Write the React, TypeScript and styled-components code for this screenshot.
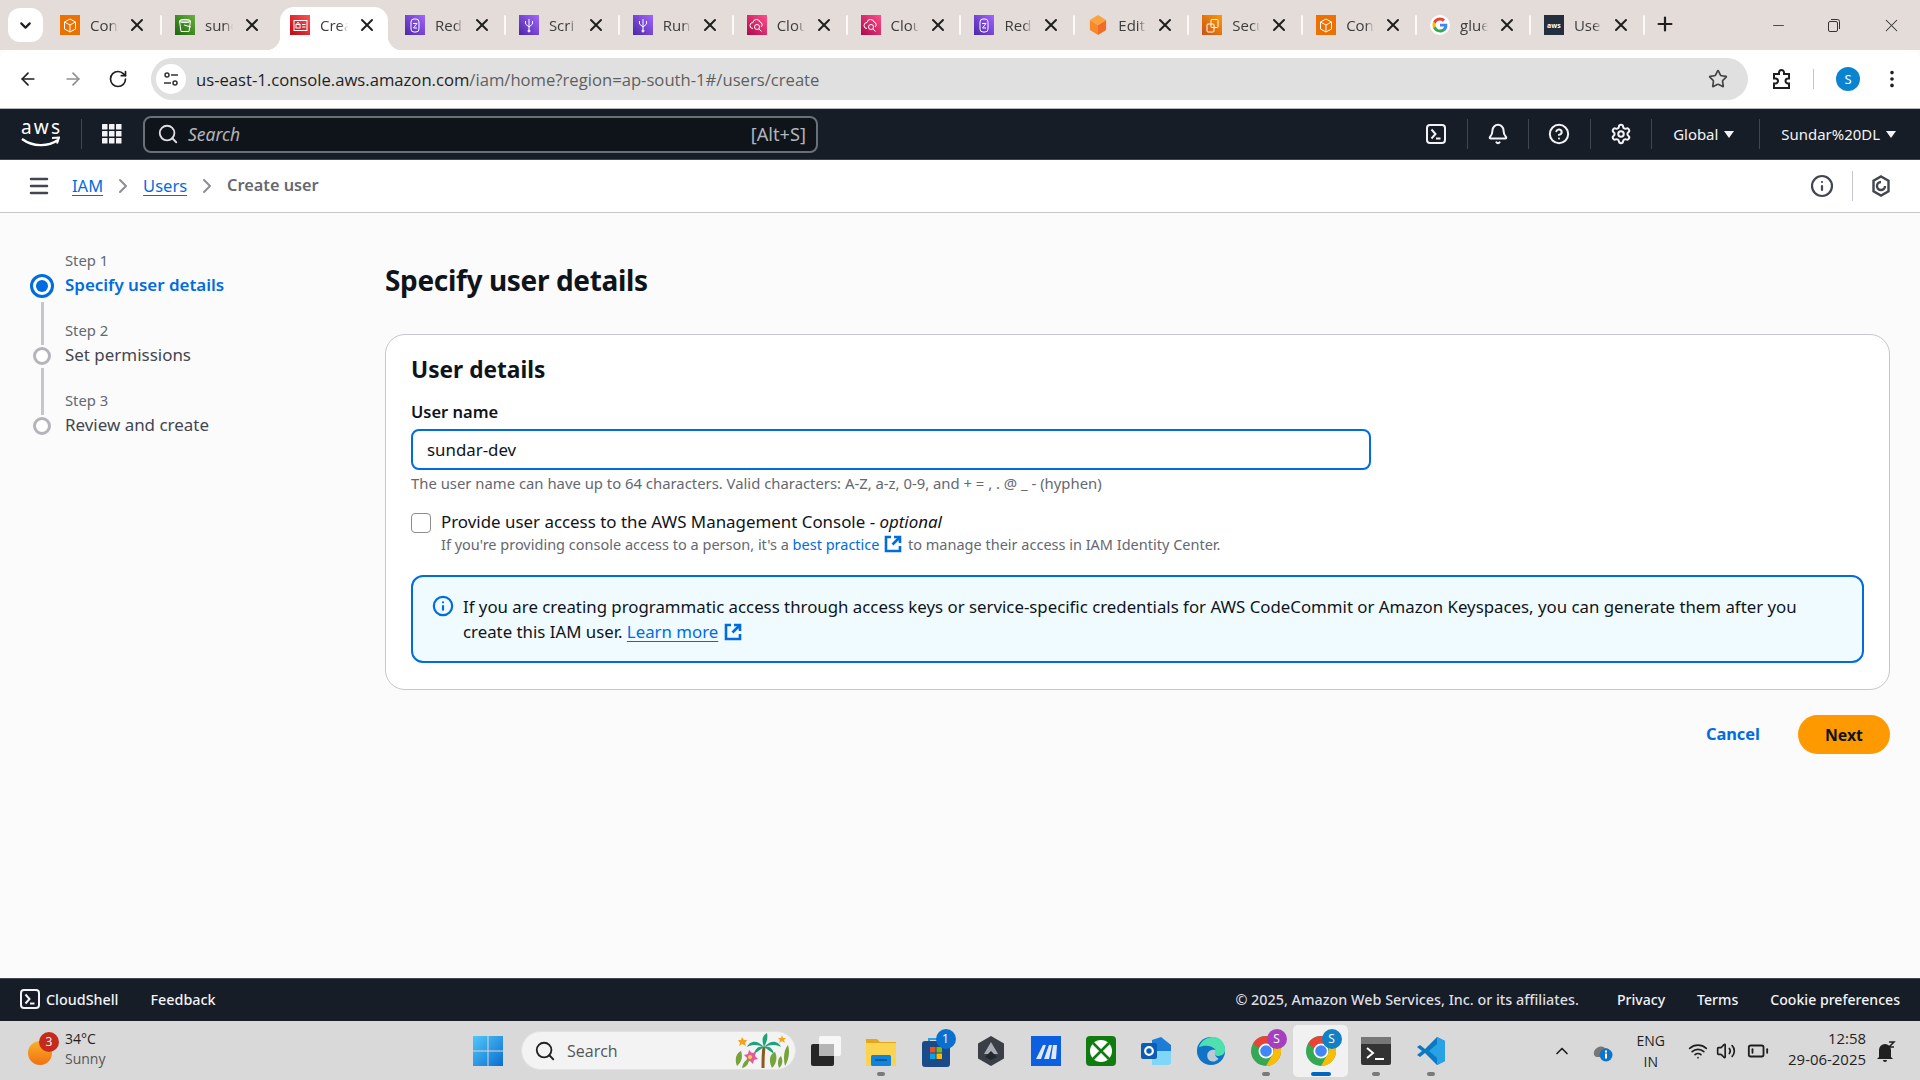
import React from "react";
import styled, { createGlobalStyle } from "styled-components";
import { ArrowLeft, ArrowRight, RotateCw, Star, EllipsisVertical, Plus, Minus, X, ChevronDown, Search as SearchIcon, Bell, CircleHelp, Settings, Info, ChevronRight, Menu, Wifi, Volume2, BatteryLow, ChevronUp } from "lucide-react";

const Global = createGlobalStyle`
  html, body { margin: 0; padding: 0; width: 1920px; height: 1080px; overflow: hidden; background: #fbfbfb; }
  * { box-sizing: border-box; }
  body { font-family: "Noto Sans", "Open Sans", sans-serif; color: #0f141a; }
`;
const Page = styled.div`display: flex; flex-direction: column; width: 1920px; height: 1080px;`;

/* tab strip */
const TabStrip = styled.div`display: flex; align-items: flex-end; height: 50px; background: #e3dcd9; padding-left: 8px; position: relative;`;
const TabMenu = styled.div`width: 35px; height: 34px; margin-bottom: 8px; margin-right: 4px; border-radius: 12px; background: #fff; display: flex; align-items: center; justify-content: center; color: #1f1f1f;`;
const Tab = styled.div<{ $wide?: boolean; $noSep?: boolean }>`
  width: ${p => (p.$wide ? "115px" : "113.9px")}; height: 43px; display: flex; align-items: center; padding: 0 0 7px 13px; flex: none; position: relative;
  &::after { content: ""; display: ${p => (p.$noSep ? "none" : "block")}; position: absolute; right: 0; top: 8px; width: 2px; height: 20px; border-radius: 1px; background: #fbf8f7; }
`;
const ActiveShape = styled.span`
  position: absolute; left: 3px; right: 4px; top: 0; bottom: 0; background: #fff; border-radius: 14px 14px 0 0;
  &::before, &::after { content: ""; position: absolute; bottom: 0; width: 14px; height: 14px; }
  &::before { left: -14px; background: radial-gradient(circle at 0 0, transparent 14px, #fff 14.5px); }
  &::after { right: -14px; background: radial-gradient(circle at 100% 0, transparent 14px, #fff 14.5px); }
`;
const TabTitle = styled.span`
  font-family: "Open Sans", sans-serif; font-size: 15px; color: #3c3c3c; width: 28px; margin-left: 10px; overflow: hidden; white-space: nowrap; flex: none; position: relative;
  mask-image: linear-gradient(to right, #000 70%, transparent 100%);
`;
const TabClose = styled.span`margin-left: 9px; display: flex; color: #1f1f1f; position: relative;`;
const TabIcon = styled.span<{ $bg: string }>`width: 20px; height: 20px; flex: none; display: flex; align-items: center; justify-content: center; position: relative; background: ${p => p.$bg};`;
const AwsFavicon = styled.span`color: #fff; font-size: 7px; font-weight: 700;`;
const NewTab = styled.div`margin: 0 0 15px 9px; display: flex; color: #1f1f1f;`;
const WindowButtons = styled.div`margin-left: auto; display: flex; align-items: center; height: 50px; padding-right: 18px; gap: 39px; color: #333;`;

/* address bar */
const AddressBar = styled.div`display: flex; align-items: center; height: 58px; background: #fff; border-radius: 10px 10px 0 0; padding: 0 15px 0 18px; flex: none;`;
const NavIcons = styled.div`display: flex; gap: 25px; color: #1f1f1f; margin-right: 23px;`;
const UrlPill = styled.div`width: 1597px; height: 42px; border-radius: 21px; background: #e0e0e0; display: flex; align-items: center; padding: 0 20px 0 5px;`;
const SiteInfo = styled.span`width: 30px; height: 30px; border-radius: 50%; background: #fff; display: flex; align-items: center; justify-content: center; margin-right: 10px;`;
const UrlText = styled.span`font-family: "Open Sans", sans-serif; font-size: 16.65px; color: #5f5f5f; flex: 1; b { font-weight: 400; color: #1f1f1f; }`;
const BarRight = styled.div`display: flex; align-items: center; margin-left: 23px; flex: 1; color: #1f1f1f;`;
const BarSep = styled.span`width: 1px; height: 20px; background: #c4c4c4; margin: 0 22px 0 20px;`;
const Avatar = styled.span`width: 24px; height: 24px; border-radius: 50%; background: #0a84d0; color: #fff; font-size: 13px; display: flex; align-items: center; justify-content: center; margin-right: 21px;`;

/* console nav */
const TopNav = styled.div`height: 52px; flex: none; background: #161d26; border-top: 1px solid #b4b4bb; border-bottom: 1px solid #424650; display: flex; align-items: center; color: #f3f3f7; padding-left: 21px;`;
const LogoWrap = styled.div`width: 39px; height: 30px; display: flex; flex: none; margin-right: 21px;`;
const NavSep = styled.span`width: 1px; height: 30px; background: #424650; flex: none;`;
const GridWrap = styled.div`display: flex; margin: 0 21px 0 20px;`;
const SearchBox = styled.div`width: 675px; height: 37px; border: 2px solid #6b6f78; border-radius: 8px; background: #0f141a; display: flex; align-items: center; padding: 0 10px 0 12px; color: #dedee3;`;
const SearchHint = styled.span`font-style: italic; font-size: 17.5px; color: #b4b4bb; margin-left: 9px; flex: 1;`;
const SearchKey = styled.span`font-size: 18.2px; color: #b4b4bb;`;
const NavRight = styled.div`margin-left: auto; display: flex; align-items: center; height: 100%; padding-right: 24px;`;
const NavIconCell = styled.div`width: 60.5px; display: flex; justify-content: center;`;
const NavText = styled.div<{ $pr: number }>`display: flex; align-items: center; gap: 6px; font-size: 14.95px; padding: 0 ${p => p.$pr}px 0 21px; color: #f3f3f7; white-space: nowrap;`;
const Caret = styled.span`width: 0; height: 0; border-left: 5px solid transparent; border-right: 5px solid transparent; border-top: 7px solid currentColor;`;

/* breadcrumbs */
const Crumbs = styled.div`height: 53px; flex: none; background: #fff; border-bottom: 1px solid #c6c6cd; display: flex; align-items: center; padding: 0 29px 0 27px;`;
const CrumbMenu = styled.span`display: flex; color: #424650; margin-right: 21px;`;
const CrumbLink = styled.a`color: #006ce0; font-size: 16.5px; margin-bottom: 2px; text-decoration: underline; text-underline-offset: 3px;`;
const CrumbChevron = styled.span`display: flex; color: #8c8c94; margin: 0 8px;`;
const CrumbCurrent = styled.span`color: #656871; font-size: 16.3px; margin-bottom: 2px; font-weight: 600;`;
const CrumbRight = styled.div`margin-left: auto; display: flex; align-items: center; color: #424650;`;
const CrumbSep = styled.span`width: 1px; height: 30px; background: #c6c6cd; margin: 0 18px;`;

/* main */
const Main = styled.div`flex: 1; display: flex; min-height: 0; padding: 36px 30px 0 29px; background: #fbfbfb;`;
const Steps = styled.ol`list-style: none; margin: 0; padding: 0; width: 356px; flex: none;`;
const Step = styled.li`height: 70px; display: grid; grid-template-columns: 36px 1fr; grid-template-rows: 24px 24px; position: relative;`;
const StepNo = styled.span`grid-column: 2; font-size: 14.8px; color: #656871; line-height: 24px; margin-top: -1px;`;
const StepName = styled.span<{ $active?: boolean }>`grid-column: 2; font-size: 16.95px; line-height: 24px; color: ${p => (p.$active ? "#006ce0" : "#424650")}; font-weight: ${p => (p.$active ? 600 : 400)};`;
const Dot = styled.span<{ $active?: boolean }>`
  position: absolute; left: ${p => (p.$active ? "1px" : "4px")}; top: ${p => (p.$active ? "25px" : "28px")};
  width: ${p => (p.$active ? "24px" : "18px")}; height: ${p => (p.$active ? "24px" : "18px")}; border-radius: 50%; background: #fff;
  border: 3px solid ${p => (p.$active ? "#006ce0" : "#b4b4bb")};
  &::before { content: ""; display: ${p => (p.$active ? "block" : "none")}; width: 12px; height: 12px; margin: 3px; border-radius: 50%; background: #006ce0; }
`;
const Connector = styled.span<{ $top: number; $h: number }>`position: absolute; left: 11.5px; top: ${p => p.$top}px; height: ${p => p.$h}px; width: 3px; background: #c6c6cd;`;
const Content = styled.div`flex: 1; min-width: 0;`;
const H1 = styled.h1`margin: 0; font-size: 28px; line-height: 36px; font-weight: 700; letter-spacing: -0.35px; color: #0f141a; padding-top: 13px;`;
const Card = styled.section`margin-top: 36px; height: 356px; background: #fff; border: 1px solid #c6c6cd; border-radius: 20px; padding: 18px 25px;`;
const H2 = styled.h2`margin: 0; font-size: 22.7px; line-height: 34px; font-weight: 700;`;
const Label = styled.label`display: block; margin-top: 13px; font-size: 16.5px; line-height: 24px; font-weight: 600;`;
const Input = styled.div`margin-top: 5px; width: 960px; height: 41px; border: 2px solid #006ce0; border-radius: 8px; background: #fff; font-size: 16.85px; display: flex; align-items: center; padding: 0 14px;`;
const Hint = styled.p`margin: 1px 0 0; font-size: 14.85px; line-height: 24px; color: #656871;`;
const CheckRow = styled.div`display: flex; margin-top: 13px; gap: 10px;`;
const Checkbox = styled.span`width: 20px; height: 20px; border: 1.5px solid #8c8c94; border-radius: 4px; background: #fff; flex: none; margin-top: 5px;`;
const CheckText = styled.div`font-size: 16.9px; line-height: 27px; em { font-style: italic; }`;
const CheckSub = styled.div`font-size: 14.5px; line-height: 20px; margin-top: -1px; color: #656871; a { color: #006ce0; }`;
const Ext = styled.span`display: inline-flex; vertical-align: -3px; margin: 0 2px 0 1px; color: #006ce0;`;
const Alert = styled.div`margin-top: 21px; width: 1453px; height: 88px; border: 2px solid #006ce0; border-radius: 12px; background: #f0fbff; display: flex; padding: 16.5px 22px 0 19px; gap: 9px;`;
const AlertIcon = styled.span`display: flex; color: #006ce0; height: 25px; align-items: center; flex: none;`;
const AlertText = styled.div`font-size: 16.82px; line-height: 25px; a { color: #006ce0; text-decoration: underline; text-underline-offset: 3px; }`;
const Actions = styled.div`display: flex; justify-content: flex-end; align-items: center; margin-top: 25px; gap: 38px;`;
const Cancel = styled.span`font-size: 16.4px; font-weight: 700; color: #006ce0; margin-bottom: 2px;`;
const Next = styled.span`width: 92px; height: 39px; border-radius: 20px; background: #ff9900; font-size: 15.8px; font-weight: 700; color: #0f141a; display: flex; align-items: center; justify-content: center;`;

/* footer */
const Footer = styled.div`height: 43px; flex: none; background: #161d26; border-top: 1px solid #424650; display: flex; align-items: center; padding: 0 20px 2px; color: #f3f3f7; font-size: 14.35px; font-weight: 500;`;
const FootItem = styled.span`display: flex; align-items: center; gap: 6px; margin-right: 32px;`;
const Copy = styled.span`margin-left: auto; color: #dedee3; margin-right: 6px;`;
const FootLink = styled.span`margin-left: 32px; font-size: 14.1px;`;

/* taskbar */
const Taskbar = styled.div`height: 59px; flex: none; background: #d9d9d9; display: flex; align-items: center; position: relative; padding-left: 28px; font-family: "Open Sans", sans-serif;`;
const Weather = styled.div`width: 445px; flex: none; display: flex; align-items: center; gap: 13px;`;
const WeatherIcon = styled.span`width: 24px; height: 24px; margin-top: 4px; border-radius: 50%; background: linear-gradient(#fbb02a, #f0710f); position: relative; flex: none;`;
const Badge = styled.span<{ $bg: string }>`position: absolute; right: -7px; top: -9px; width: 20px; height: 20px; border-radius: 50%; background: ${p => p.$bg}; color: #fff; font-size: 12px; display: flex; align-items: center; justify-content: center;`;
const AppBadge = styled(Badge)`right: -5px; top: -6px;`;
const WeatherText = styled.div`font-size: 14px; line-height: 20px; color: #1f1f1f; margin-bottom: 3px; span { display: block; color: #555; }`;
const WinLogo = styled.span`display: flex; flex: none; margin-right: 18px;`;
const TaskSearch = styled.div`width: 275px; height: 39px; border-radius: 20px; background: #f3f3f3; border: 1px solid #e2e2e2; display: flex; align-items: center; padding-left: 12px; gap: 11px; font-size: 16px; color: #555; flex: none; margin-right: 2px;`;
const Flower = styled.span`margin-left: auto; margin-right: 3px; display: flex;`;
const AppSlot = styled.div<{ $active?: boolean }>`width: 55px; height: 52px; flex: none; display: flex; align-items: center; justify-content: center; position: relative; border-radius: 5px; background: ${p => (p.$active ? "#f1f1f1" : "transparent")};`;
const IconAnchor = styled.span`position: relative; display: flex;`;
const RunDot = styled.span<{ $active?: boolean }>`position: absolute; bottom: 1px; left: 50%; transform: translateX(-50%); height: 4px; border-radius: 2px; width: ${p => (p.$active ? "20px" : "8px")}; background: ${p => (p.$active ? "#0067c0" : "#7a7a7a")};`;
const Tray = styled.div`margin-left: auto; display: flex; align-items: center; padding-right: 24px; color: #1f1f1f;`;
const Lang = styled.div`font-size: 14px; line-height: 21px; text-align: center; margin: 0 23px 0 24px;`;
const Clock = styled.div`font-size: 14.95px; line-height: 21px; text-align: right; margin: 0 10px 4px 19px;`;
const TrayGap = styled.span<{ $mr: number }>`display: flex; margin-right: ${p => p.$mr}px;`;

const Cube = () => <svg width="14" height="15" viewBox="0 0 14 15" fill="none" stroke="#fff" strokeWidth="1"><path d="M7 1l5.500 3v7L7 14l-5.500-3V4zM1.500 4L7 7l5.500-3M7 7v7"/></svg>;
const Bucket = () => <svg width="14" height="15" viewBox="0 0 14 15" fill="none" stroke="#fff" strokeWidth="1"><path d="M1.500 3l1.500 10.500h8L12.500 3z"/><ellipse cx="7" cy="3" rx="5.500" ry="1.600"/><path d="M6 7l7 2"/></svg>;
const IdCard = () => <svg width="15" height="13" viewBox="0 0 15 13" fill="none" stroke="#fff" strokeWidth="1"><rect x="1" y="1.500" width="13" height="10"/><rect x="3" y="5.500" width="4" height="3.500"/><path d="M4 5.500V4.500a1 1 0 0 1 2 0v1M9 5.500h3.500M9 8h3.500"/></svg>;
const Db = () => <svg width="12" height="15" viewBox="0 0 12 15" fill="none" stroke="#fff" strokeWidth="1"><rect x="2" y="1" width="8" height="13" rx="3"/><path d="M4 5.500h4L4.500 10H8"/></svg>;
const Fork = () => <svg width="12" height="15" viewBox="0 0 12 15" fill="none" stroke="#fff" strokeWidth="1"><path d="M6 1v13M2.500 3v3l3.500 3 3.500-3V3"/><circle cx="6" cy="13" r="1"/></svg>;
const Cloud = () => <svg width="15" height="15" viewBox="0 0 15 15" fill="none" stroke="#fff" strokeWidth="1"><path d="M4 10.500a3 3 0 0 1 0-6 3.600 3.600 0 0 1 7-.500 2.800 2.800 0 0 1 1 5"/><circle cx="8" cy="9" r="2.500"/><path d="M10 11l2.500 2.500"/></svg>;
const Sec = () => <svg width="15" height="15" viewBox="0 0 15 15" fill="none" stroke="#fff" strokeWidth="1"><rect x="6" y="1.500" width="7" height="8" rx="1"/><rect x="2" y="6" width="7" height="8" rx="1"/></svg>;
const G = () => <svg width="20" height="20" viewBox="0 0 48 48"><circle cx="24" cy="24" r="24" fill="#fff"/><path fill="#4285F4" d="M41.600 24.500c0-1.300-.1-2.500-.3-3.700H24v7h9.900c-.4 2.300-1.700 4.200-3.600 5.500v4.600h5.900c3.400-3.200 5.400-7.800 5.400-13.400z"/><path fill="#34A853" d="M24 42c4.900 0 9-1.600 12.100-4.400l-5.900-4.600c-1.600 1.100-3.700 1.800-6.200 1.800-4.700 0-8.800-3.200-10.200-7.500H7.700v4.700C10.700 38 16.900 42 24 42z"/><path fill="#FBBC05" d="M13.800 27.300c-.4-1.100-.6-2.200-.6-3.400s.2-2.300.6-3.400v-4.700H7.700A18 18 0 0 0 6 24c0 2.900.7 5.600 1.900 8z"/><path fill="#EA4335" d="M24 13.200c2.700 0 5 .9 6.900 2.700l5.200-5.200C33 7.800 28.900 6 24 6 16.900 6 10.700 10 7.700 15.800l6.100 4.700c1.400-4.300 5.500-7.300 10.200-7.300z"/></svg>;
const OrangeBox = () => <svg width="18" height="20" viewBox="0 0 20 22"><path fill="#f26b28" d="M10 11l9-5.500v11L10 22z"/><path fill="#f98a2b" d="M10 11L1 5.500v11L10 22z"/><path fill="#fca33d" d="M10 0l9 5.500L10 11 1 5.500z"/></svg>;

const grad = (a: string, b: string) => `linear-gradient(45deg, ${a}, ${b})`;
const tabs: { t: string; bg: string; i: React.ReactNode; active?: boolean; noSep?: boolean }[] = [
  { t: "Con", bg: "#ed7100", i: <Cube /> },
  { t: "sund", bg: grad("#1b660f", "#6cae3e"), i: <Bucket />, noSep: true },
  { t: "Crea", bg: grad("#bd0816", "#ff5252"), i: <IdCard />, active: true, noSep: true },
  { t: "Red", bg: grad("#4d27a8", "#a166ff"), i: <Db /> },
  { t: "Scri", bg: grad("#4d27a8", "#a166ff"), i: <Fork /> },
  { t: "Run", bg: grad("#4d27a8", "#a166ff"), i: <Fork /> },
  { t: "Clou", bg: grad("#b0084d", "#ff4f8b"), i: <Cloud /> },
  { t: "Clou", bg: grad("#b0084d", "#ff4f8b"), i: <Cloud /> },
  { t: "Red", bg: grad("#4d27a8", "#a166ff"), i: <Db /> },
  { t: "Edit", bg: "transparent", i: <OrangeBox /> },
  { t: "Secu", bg: grad("#c8511b", "#ff9900"), i: <Sec /> },
  { t: "Con", bg: "#ed7100", i: <Cube /> },
  { t: "glue", bg: "transparent", i: <G /> },
  { t: "Use", bg: "#232f3e", i: <AwsFavicon>aws</AwsFavicon> },
];

const ShellIcon = ({ s = 20 }: { s?: number }) => <svg width={s} height={s} viewBox="0 0 20 20" fill="none" stroke="#f3f3f7" strokeWidth="2"><rect x="1" y="1" width="18" height="18" rx="3"/><path d="M5.500 5.500l4 4.500-4 4.500M10 14.500h4.500"/></svg>;
const ExtIcon = ({ s = 18 }: { s?: number }) => <svg width={s} height={s} viewBox="0 0 18 18" fill="none" stroke="currentColor" strokeWidth="2.600"><path d="M7 2H2v14h14v-5M10 2h6v6M16 2L8.500 9.500"/></svg>;
const Win = () => <svg width="30" height="30" viewBox="0 0 30 30"><defs><linearGradient id="w" x1="0" y1="0" x2="1" y2="1"><stop offset="0" stopColor="#52c7f8"/><stop offset="1" stopColor="#0a6dd0"/></linearGradient></defs><path fill="url(#w)" d="M0 0h14.500v14.500H0zM15.500 0H30v14.500H15.500zM0 15.500h14.500V30H0zM15.500 15.500H30V30H15.500z"/></svg>;
const Chrome = ({ badge, color }: { badge: string; color: string }) => (
  <IconAnchor>
    <svg width="32" height="32" viewBox="0 0 32 32"><circle cx="16" cy="16" r="15" fill="#34a853"/><path fill="#ea4335" d="M3 8.500A15 15 0 0 1 29 8.500L16 9a7 7 0 0 0-6.500 4.500z"/><path fill="#fbbc05" d="M29 8.500A15 15 0 0 1 16 31l6.500-11.500A7 7 0 0 0 22 10z"/><circle cx="16" cy="16" r="7.500" fill="#fff"/><circle cx="16" cy="16" r="5.800" fill="#4285f4"/></svg>
    <AppBadge $bg={color}>{badge}</AppBadge>
  </IconAnchor>
);
const apps: { n: React.ReactNode; dot?: boolean; active?: boolean }[] = [
  { n: <svg width="30" height="30" viewBox="0 0 30 30"><rect x="8" y="0" width="22" height="20" rx="2" fill="#f7f7f7"/><rect x="0" y="8" width="23" height="22" rx="2" fill="#262626"/><rect x="8" y="8" width="15" height="12" fill="#b5b5b5"/></svg> },
  { n: <svg width="30" height="30" viewBox="0 0 30 30"><path fill="#e3a71b" d="M0 3h11l3 3h16v3H0z"/><path fill="#fad44e" d="M0 7h30v23H0z"/><rect x="5" y="19" width="20" height="11" rx="1.500" fill="#0f84dc"/><rect x="9" y="23" width="12" height="2" fill="#0a5a9c"/></svg>, dot: true },
  { n: <IconAnchor><svg width="30" height="32" viewBox="0 0 30 32"><path d="M8 8V4h8" fill="none" stroke="#29a1dc" strokeWidth="2"/><rect x="1" y="6" width="28" height="26" rx="3" fill="#1a4a88"/><path fill="#f25022" d="M9 12h5.500v5.500H9z"/><path fill="#7fba00" d="M15.500 12H21v5.500h-5.500z"/><path fill="#00a4ef" d="M9 18.500h5.500V24H9z"/><path fill="#ffb900" d="M15.500 18.500H21V24h-5.500z"/></svg><AppBadge $bg="#0a70d0">1</AppBadge></IconAnchor> },
  { n: <svg width="26" height="30" viewBox="0 0 26 30"><path fill="#3a3e46" d="M13 0l13 7.500v15L13 30 0 22.500v-15z"/><path fill="#a9adb5" d="M13 6l7 12H6z"/><path fill="#24272d" d="M7 21l6-6 6 6-6 3z"/></svg> },
  { n: <svg width="30" height="30" viewBox="0 0 30 30"><rect width="30" height="30" fill="#0b5fe0"/><path d="M5 23l7-14h3l-5 14zM13 23l5-14h3l-3 14zM20 23l2-14h4l-1 14z" fill="#dfeaff"/></svg> },
  { n: <svg width="30" height="30" viewBox="0 0 30 30"><rect width="30" height="30" rx="4" fill="#107c10"/><circle cx="15" cy="15" r="11" fill="#fff"/><path d="M7 7l16 16M23 7L7 23" stroke="#107c10" strokeWidth="2.500"/></svg> },
  { n: <svg width="30" height="28" viewBox="0 0 30 28"><path fill="#1c7cd6" d="M11 3l9-3 10 8v10H11z"/><path fill="#7fd6f7" d="M11 14h19v11a3 3 0 0 1-3 3H11z"/><rect x="0" y="6" width="16" height="16" rx="2" fill="#0a5cb5"/><circle cx="8" cy="14" r="3.800" fill="none" stroke="#fff" strokeWidth="2.200"/></svg> },
  { n: <svg width="30" height="30" viewBox="0 0 32 32"><circle cx="16" cy="16" r="15" fill="#0f74c8"/><path fill="#4fe0b0" d="M3 12C6 3 14 1 19 1c7 0 12 6 12 14 0 5-5 7-9 6-3-.7-3-4-1-6-3-5-13-6-18-3z"/><path fill="#d9d9d9" d="M12 21c0-5 5-7 9-6-2 3-1 7 3 9-4 6-12 3-12-3z" opacity=".85"/></svg> },
  { n: <Chrome badge="S" color="#a53fc0" />, dot: true },
  { n: <Chrome badge="S" color="#1280c4" />, dot: true, active: true },
  { n: <svg width="30" height="28" viewBox="0 0 30 28"><rect width="30" height="28" rx="2" fill="#333"/><rect width="30" height="7" fill="#777"/><path d="M6 11l6 5-6 5" fill="none" stroke="#fff" strokeWidth="2"/><path d="M14 22h9" stroke="#fff" strokeWidth="2"/></svg>, dot: true },
  { n: <svg width="30" height="30" viewBox="0 0 30 30"><path fill="#0a78c2" d="M21 1l8 4v20l-8 4L9 17l-5 4-3-2 5-4-5-4 3-2 5 4z"/><path fill="#27a2e6" d="M21 1l8 4v20l-8 4zM21 8l-8 7 8 7z"/></svg>, dot: true },
];

export default function App() {
  return (
    <Page>
      <Global />
      <TabStrip>
        <TabMenu><ChevronDown size={17} strokeWidth={3} /></TabMenu>
        {tabs.map((t, i) => (
          <Tab key={i} $noSep={t.noSep} $wide={i < 3}>
            {t.active && <ActiveShape />}
            <TabIcon $bg={t.bg}>{t.i}</TabIcon>
            <TabTitle>{t.t}</TabTitle>
            <TabClose><X size={20} strokeWidth={2.400} /></TabClose>
          </Tab>
        ))}
        <NewTab><Plus size={22} strokeWidth={2.400} /></NewTab>
        <WindowButtons>
          <Minus size={17} strokeWidth={1.200} />
          <svg width="16" height="16" viewBox="0 0 16 16" fill="none" stroke="#333"><rect x="2.500" y="4.500" width="9" height="10" rx="1.500"/><path d="M5 2.500h6.500a2 2 0 0 1 2 2V12"/></svg>
          <X size={21} strokeWidth={1.200} />
        </WindowButtons>
      </TabStrip>
      <AddressBar>
        <NavIcons>
          <ArrowLeft size={20} />
          <ArrowRight size={20} color="#8f8f8f" />
          <RotateCw size={20} />
        </NavIcons>
        <UrlPill>
          <SiteInfo><svg width="18" height="18" viewBox="0 0 18 18" fill="none" stroke="#333" strokeWidth="1.500"><circle cx="5" cy="5" r="2"/><path d="M9 5h7M2 13h7"/><circle cx="13" cy="13" r="2"/></svg></SiteInfo>
          <UrlText><b>us-east-1.console.aws.amazon.com</b>/iam/home?region=ap-south-1#/users/create</UrlText>
          <Star size={20} color="#444" />
        </UrlPill>
        <BarRight>
          <svg width="22" height="22" viewBox="0 0 22 22" fill="none" stroke="#1f1f1f" strokeWidth="2"><path d="M3 6h5V4.500a2.500 2.500 0 0 1 5 0V6h5v4.500h-1a2.500 2.500 0 0 0 0 5h1V20H3v-4.500h1.500a2.500 2.500 0 0 0 0-5H3z"/></svg>
          <BarSep />
          <Avatar>S</Avatar>
          <EllipsisVertical size={22} />
        </BarRight>
      </AddressBar>
      <TopNav>
        <LogoWrap>
          <svg width="39" height="30" viewBox="0 0 39 30"><text x="0" y="15" fontSize="19" fontFamily="Noto Sans, sans-serif" fontWeight="400" fill="#fff" textLength="39">aws</text><path d="M1 20c11 8 26 8 36 1" fill="none" stroke="#fff" strokeWidth="2.400"/><path d="M31 19l7-.5-2 6" fill="none" stroke="#fff" strokeWidth="2"/></svg>
        </LogoWrap>
        <NavSep />
        <GridWrap><svg width="20" height="20" viewBox="0 0 20 20" fill="#f3f3f7">{[0, 7, 14].flatMap(y => [0, 7, 14].map(x => <rect key={`${x}-${y}`} x={x} y={y} width="5.500" height="5.500" rx=".5" />))}</svg></GridWrap>
        <SearchBox>
          <SearchIcon size={22} />
          <SearchHint>Search</SearchHint>
          <SearchKey>[Alt+S]</SearchKey>
        </SearchBox>
        <NavRight>
          <NavIconCell><ShellIcon /></NavIconCell>
          <NavSep />
          <NavIconCell><Bell size={22} strokeWidth={2.200} /></NavIconCell>
          <NavSep />
          <NavIconCell><CircleHelp size={22} strokeWidth={2.200} /></NavIconCell>
          <NavSep />
          <NavIconCell><Settings size={22} strokeWidth={2.200} /></NavIconCell>
          <NavSep />
          <NavText $pr={25}>Global <Caret /></NavText>
          <NavSep />
          <NavText $pr={0}>Sundar%20DL <Caret /></NavText>
        </NavRight>
      </TopNav>
      <Crumbs>
        <CrumbMenu><Menu size={24} strokeWidth={2.500} /></CrumbMenu>
        <CrumbLink>IAM</CrumbLink>
        <CrumbChevron><ChevronRight size={24} /></CrumbChevron>
        <CrumbLink>Users</CrumbLink>
        <CrumbChevron><ChevronRight size={24} /></CrumbChevron>
        <CrumbCurrent>Create user</CrumbCurrent>
        <CrumbRight>
          <Info size={24} strokeWidth={2.200} />
          <CrumbSep />
          <svg width="20" height="22" viewBox="0 0 20 22" fill="none" stroke="#424650" strokeWidth="2.400"><path d="M10 1.500l7.500 4.300v10.400L10 20.500l-7.500-4.300V5.800z"/><path d="M10 7a4 4 0 1 0 4 4" /></svg>
        </CrumbRight>
      </Crumbs>
      <Main>
        <Steps>
          <Step>
            <StepNo>Step 1</StepNo><StepName $active>Specify user details</StepName>
            <Dot $active /><Connector $top={53} $h={43} />
          </Step>
          <Step>
            <StepNo>Step 2</StepNo><StepName>Set permissions</StepName>
            <Dot /><Connector $top={49} $h={47} />
          </Step>
          <Step>
            <StepNo>Step 3</StepNo><StepName>Review and create</StepName>
            <Dot />
          </Step>
        </Steps>
        <Content>
          <H1>Specify user details</H1>
          <Card>
            <H2>User details</H2>
            <Label>User name</Label>
            <Input>sundar-dev</Input>
            <Hint>The user name can have up to 64 characters. Valid characters: A-Z, a-z, 0-9, and + = , . @ _ - (hyphen)</Hint>
            <CheckRow>
              <Checkbox />
              <div>
                <CheckText>Provide user access to the AWS Management Console - <em>optional</em></CheckText>
                <CheckSub>If you're providing console access to a person, it's a <a>best practice</a> <Ext><ExtIcon /></Ext> to manage their access in IAM Identity Center.</CheckSub>
              </div>
            </CheckRow>
            <Alert>
              <AlertIcon><Info size={22} strokeWidth={2.400} /></AlertIcon>
              <AlertText>If you are creating programmatic access through access keys or service-specific credentials for AWS CodeCommit or Amazon Keyspaces, you can generate them after you create this IAM user. <a>Learn more</a> <Ext><ExtIcon /></Ext></AlertText>
            </Alert>
          </Card>
          <Actions>
            <Cancel>Cancel</Cancel>
            <Next>Next</Next>
          </Actions>
        </Content>
      </Main>
      <Footer>
        <FootItem><ShellIcon /> CloudShell</FootItem>
        <FootItem>Feedback</FootItem>
        <Copy>© 2025, Amazon Web Services, Inc. or its affiliates.</Copy>
        <FootLink>Privacy</FootLink>
        <FootLink>Terms</FootLink>
        <FootLink>Cookie preferences</FootLink>
      </Footer>
      <Taskbar>
        <Weather>
          <WeatherIcon><Badge $bg="#c42b1c">3</Badge></WeatherIcon>
          <WeatherText>34°C<span>Sunny</span></WeatherText>
        </Weather>
        <WinLogo><Win /></WinLogo>
        <TaskSearch>
          <SearchIcon size={22} color="#222" />
          Search
          <Flower><svg width="60" height="36" viewBox="0 0 60 36"><path d="M31 35c0-8 0-14 1-21" stroke="#8a5a20" strokeWidth="3" fill="none"/><path fill="#1ea37a" d="M32 14C24 5 17 9 15 14c6-3 11-2 17 0zm0 0c8-9 15-5 17 0-6-3-11-2-17 0zm0 0c-3-8-1-12 3-14 1 5 0 9-3 14zm0 0c-5-2-9 2-10 7 4-3 7-5 10-7zm0 0c5-2 9 2 10 7-4-3-7-5-10-7z"/><path fill="#e55a9a" d="M17 17l3 3 4-1-1 4 3 3-4 1-1 4-3-3-4 1 1-4-3-3 4-1z"/><circle cx="18" cy="24" r="2" fill="#f7d34a"/><path fill="#f6a21d" d="M10 4l2 3 3 0-2 3 1 3-4-2-3 2 1-3-2-3h3zM50 2l1 3h3l-2 2 1 3-3-2-3 2 1-3-2-2h3z"/><path fill="#76a33a" d="M40 35c-4-8-2-14 3-16 3 6 1 12-3 16zM5 33c-3-8 0-13 4-15 2 5 1 11-4 15zM10 35c1-5 3-8 7-9 0 4-2 8-7 9zM53 33c-2-8-1-17 3-21 2 6 1 15-3 21zM47 35c-2-5-1-10 2-12 2 4 2 9-2 12z"/></svg></Flower>
        </TaskSearch>
        {apps.map((a, i) => (
          <AppSlot key={i} $active={a.active}>{a.n}{a.dot && <RunDot $active={a.active} />}</AppSlot>
        ))}
        <Tray>
          <TrayGap $mr={19}><ChevronUp size={20} /></TrayGap>
          <IconAnchor><svg width="22" height="22" viewBox="0 0 22 22"><path fill="#777" d="M3 15a7 7 0 0 1 11-7 5 5 0 0 1 3 9H5z"/><circle cx="15" cy="15" r="6.500" fill="#0f74c8"/><rect x="14" y="13.500" width="2" height="5" fill="#fff"/><rect x="14" y="10.500" width="2" height="2" fill="#fff"/></svg></IconAnchor>
          <Lang>ENG<br />IN</Lang>
          <TrayGap $mr={8}><Wifi size={20} /></TrayGap>
          <TrayGap $mr={11}><Volume2 size={20} /></TrayGap>
          <BatteryLow size={22} />
          <Clock>12:58<br />29-06-2025</Clock>
          <svg width="20" height="24" viewBox="0 0 20 24"><path fill="#1f1f1f" d="M3 18V11a6 6 0 0 1 12 0v7l2 2H1zM7 21h4a2 2 0 0 1-4 0z"/><path d="M13 3h5l-5 5h5" fill="none" stroke="#1f1f1f" strokeWidth="1.500"/></svg>
        </Tray>
      </Taskbar>
    </Page>
  );
}
